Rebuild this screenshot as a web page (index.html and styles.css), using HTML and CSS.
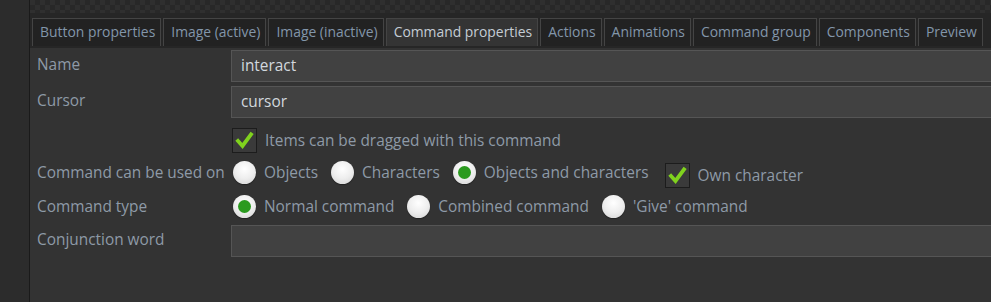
FILE: index.html
```html
<!DOCTYPE html>
<html lang="en">
<head>
  <meta charset="UTF-8" />
  <title>Command properties</title>
  <link rel="stylesheet" href="styles.css">
</head>
<body>
  <div class="side"></div>
  <div class="main">
    <div class="checker"></div>
    <div class="tabs">
      <div class="tab">Button properties</div>
      <div class="tab">Image (active)</div>
      <div class="tab">Image (inactive)</div>
      <div class="tab active">Command properties</div>
      <div class="tab">Actions</div>
      <div class="tab">Animations</div>
      <div class="tab">Command group</div>
      <div class="tab">Components</div>
      <div class="tab">Preview</div>
    </div>
    <div class="form">
      <div class="row field">
        <label>Name</label>
        <div class="input">interact</div>
      </div>
      <div class="row field">
        <label>Cursor</label>
        <div class="input">cursor</div>
      </div>
      <div class="row check-row">
        <label></label>
        <div class="opts">
          <span class="check"><svg viewBox="0 0 23 23"><path d="M5 12 L9.5 17 L18 5.5" /></svg></span>
          <span class="opt-text">Items can be dragged with this command</span>
        </div>
      </div>
      <div class="row used-row">
        <label>Command can be used on</label>
        <div class="opts">
          <span class="radio"></span><span class="opt-text">Objects</span>
          <span class="radio"></span><span class="opt-text">Characters</span>
          <span class="radio on"></span><span class="opt-text">Objects and characters</span>
          <span class="check low"><svg viewBox="0 0 23 23"><path d="M5 12 L9.5 17 L18 5.5" /></svg></span>
          <span class="opt-text low">Own character</span>
        </div>
      </div>
      <div class="row type-row">
        <label>Command type</label>
        <div class="opts">
          <span class="radio on"></span><span class="opt-text">Normal command</span>
          <span class="radio"></span><span class="opt-text">Combined command</span>
          <span class="radio"></span><span class="opt-text">'Give' command</span>
        </div>
      </div>
      <div class="row field conj">
        <label>Conjunction word</label>
        <div class="input"></div>
      </div>
    </div>
  </div>
</body>
</html>
```

FILE: styles.css
```css
body {
  margin: 0;
  background: #333333;
  font-family: "Open Sans", sans-serif;
  font-size: 15.4px;
  color: #8e9aa7;
  display: flex;
  height: 302px;
  overflow: hidden;
}
.side {
  width: 29px;
  background: #2c2c2c;
  border-right: 1px solid #1a1a1a;
  flex: none;
}
.main {
  flex: 1;
  min-width: 0;
  display: flex;
  flex-direction: column;
}
.checker {
  height: 13px;
  background-color: #2f2f2f;
  background-image:
    linear-gradient(45deg, #282828 25%, transparent 25%, transparent 75%, #282828 75%),
    linear-gradient(45deg, #282828 25%, transparent 25%, transparent 75%, #282828 75%);
  background-size: 10px 10px;
  background-position: 0 0, 5px 5px;
}
.tabs {
  display: flex;
  gap: 2px;
  padding: 5px 0 0 2px;
  background: #262626;
  border-bottom: 2px solid #262626;
  font-size: 13.9px;
}
.tab {
  height: 27px;
  line-height: 26px;
  padding: 0 5px 0 7px;
  background: #222222;
  border: 1px solid #444444;
  border-bottom: none;
  white-space: nowrap;
  color: #8296aa;
}
.tab.active {
  background: #343434;
  color: #c4ccd4;
}
.form {
  padding-top: 2px;
}
.row {
  display: flex;
  align-items: center;
}
.row label {
  width: 194px;
  padding-left: 7px;
  flex: none;
}
.input {
  flex: 1;
  height: 30px;
  line-height: 30px;
  background: #414141;
  border: 1px solid #555555;
  border-right: none;
  padding-left: 9px;
  color: #d2d8de;
}
.field {
  margin-bottom: 4px;
}
.field label {
  padding-bottom: 4px;
}
.opts {
  display: flex;
  align-items: center;
  margin-left: 2px;
}
.check-row {
  height: 25px;
  margin-top: 10px;
}
.check-row .opts {
  margin-left: 1px;
}
.used-row {
  height: 34px;
  margin-top: 2px;
}
.type-row {
  height: 34px;
}
.conj {
  margin-top: 2px;
}
.check {
  width: 23px;
  height: 23px;
  background: #3a3a3a;
  border: 1px solid #1c1c1c;
  display: inline-block;
  flex: none;
}
.check svg {
  width: 23px;
  height: 23px;
  display: block;
}
.check path {
  fill: none;
  stroke: #80d21e;
  stroke-width: 3.8;
  stroke-linecap: square;
  stroke-linejoin: miter;
}
.check.low {
  margin-top: 6px;
  margin-left: 3px;
}
.opt-text {
  margin-left: 8px;
  margin-right: 13px;
  white-space: nowrap;
}
.opt-text.low {
  margin-top: 6px;
}
.radio {
  width: 23px;
  height: 23px;
  border-radius: 50%;
  background: radial-gradient(circle at 50% 35%, #ffffff 0%, #eeeeee 50%, #d2d2d2 100%);
  box-shadow: 0 1px 1px #222222;
  position: relative;
  flex: none;
}
.radio.on::after {
  content: "";
  position: absolute;
  left: 5px;
  top: 5px;
  width: 13px;
  height: 13px;
  border-radius: 50%;
  background: #2b9a1f;
}
```
